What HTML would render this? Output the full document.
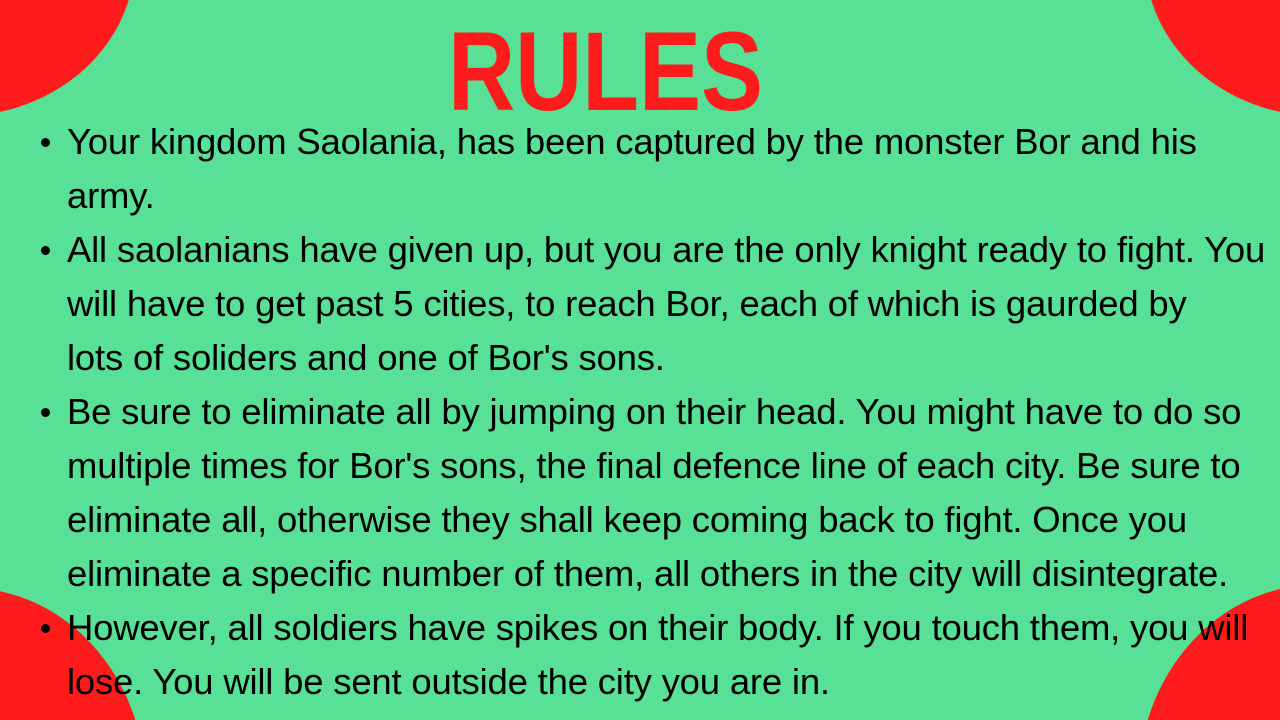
<!DOCTYPE html>
<html style="width:1280px;height:720px;overflow:hidden"><head><style>
html,body{margin:0;padding:0}
body{width:1280px;height:720px;background:#58e096;overflow:hidden;font-family:"Liberation Sans",sans-serif}
#w{position:relative;width:1280px;height:720px;overflow:hidden}
.c{position:absolute;background:#ff1b1b;border-radius:50%}
.t{position:absolute;left:448px;top:16px;font-size:112px;font-weight:bold;color:#ff1b1b;line-height:112px;transform:scaleX(0.83);transform-origin:left top}
.l{position:absolute;left:67px;font-size:36.5px;color:#000;white-space:nowrap;line-height:40px;letter-spacing:-0.2px}
.b{position:absolute;left:41px;width:9px;height:9px;border-radius:50%;background:#000}
</style></head><body><div id="w">
<div class="c" style="left:-215px;top:-200px;width:350px;height:316px"></div>
<div class="c" style="left:1145px;top:-200px;width:350px;height:316px"></div>
<div class="c" style="left:-210px;top:588px;width:356px;height:400px"></div>
<div class="c" style="left:1138px;top:585px;width:356px;height:400px"></div>
<div class="t">RULES</div>
<div class="b" style="top:138px"></div>
<div class="l" style="top:122px">Your kingdom Saolania, has been captured by the monster Bor and his</div>
<div class="l" style="top:176px">army.</div>
<div class="b" style="top:246px"></div>
<div class="l" style="top:230px">All saolanians have given up, but you are the only knight ready to fight. You</div>
<div class="l" style="top:284px">will have to get past 5 cities, to reach Bor, each of which is gaurded by</div>
<div class="l" style="top:338px">lots of soliders and one of Bor's sons.</div>
<div class="b" style="top:408px"></div>
<div class="l" style="top:392px">Be sure to eliminate all by jumping on their head. You might have to do so</div>
<div class="l" style="top:446px">multiple times for Bor's sons, the final defence line of each city. Be sure to</div>
<div class="l" style="top:500px">eliminate all, otherwise they shall keep coming back to fight. Once you</div>
<div class="l" style="top:554px">eliminate a specific number of them, all others in the city will disintegrate.</div>
<div class="b" style="top:624px"></div>
<div class="l" style="top:608px">However, all soldiers have spikes on their body. If you touch them, you will</div>
<div class="l" style="top:662px">lose. You will be sent outside the city you are in.</div>
</div></body></html>
